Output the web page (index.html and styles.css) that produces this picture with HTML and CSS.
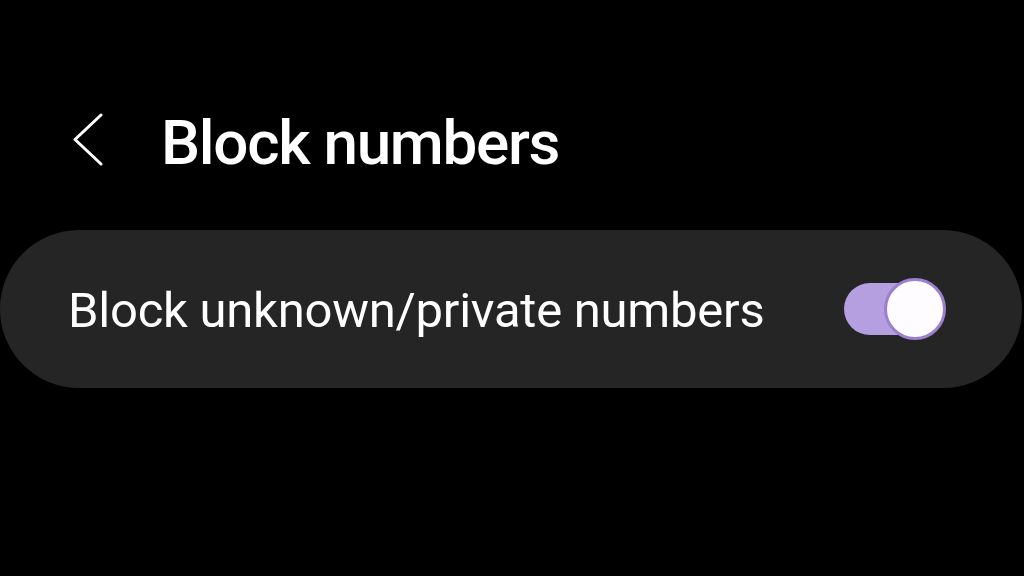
FILE: index.html
```html
<!DOCTYPE html>
<html>
<head>
<meta charset="utf-8">
<link rel="stylesheet" href="styles.css">
</head>
<body>
<div class="page">
  <header class="header">
    <span class="back" aria-label="Back">
      <svg width="32" height="54" viewBox="0 0 32 54"><polyline points="29,2 3,26.5 29,51" fill="none" stroke="#ffffff" stroke-width="3" stroke-linecap="round" stroke-linejoin="round"/></svg>
    </span>
    <h1 class="title">Block numbers</h1>
  </header>
  <section class="card">
    <span class="label">Block unknown/private numbers</span>
    <span class="toggle"><span class="track"></span><span class="thumb"></span></span>
  </section>
</div>
</body>
</html>
```
FILE: styles.css
```css
html, body { margin: 0; padding: 0; background: #000; }
body { width: 1024px; height: 576px; overflow: hidden; font-family: Roboto, "Noto Sans", sans-serif; color: #fff; }
.page { padding-top: 90px; }
.header { height: 100px; display: flex; align-items: center; padding-left: 72px; }
.back { display: flex; width: 32px; height: 54px; }
.title { margin: 6px 0 0 57px; font-size: 62px; font-weight: 500; line-height: 1.17; letter-spacing: -1.3px; }
.card { margin-top: 40px; height: 158px; width: 1022px; box-sizing: border-box; background: #252525; border-radius: 79px; display: flex; align-items: center; justify-content: space-between; padding: 0 76px 0 68px; }
.label { font-size: 49px; line-height: 1.17; letter-spacing: -0.25px; margin-top: 4px; }
.toggle { position: relative; width: 102px; height: 62px; display: flex; align-items: center; }
.track { width: 100px; height: 52px; border-radius: 26px; background: #b59fe0; }
.thumb { position: absolute; right: 0; top: 0; width: 56px; height: 56px; border-radius: 50%; background: #fefcff; border: 3px solid #9a80cf; }
```
